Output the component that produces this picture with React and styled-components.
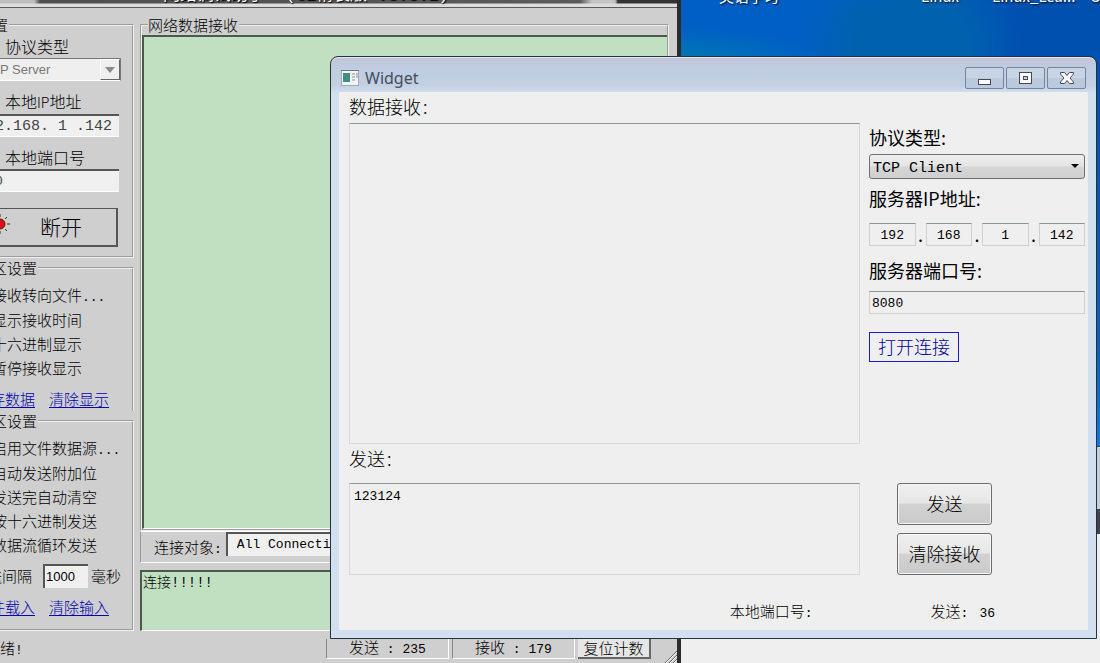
import React, { useState } from "react";
import styled, { createGlobalStyle } from "styled-components";

const receiveOptions = ["接收转向文件...", "显示接收时间", "十六进制显示", "暂停接收显示"];

const sendOptions = [
  "启用文件数据源...",
  "自动发送附加位",
  "发送完自动清空",
  "按十六进制发送",
  "数据流循环发送",
];

function OptionList({ options }) {
  return options.map((text) => {
    const dots = text.endsWith("...");
    return (
      <Option key={text}>
        <input type="checkbox" />
        <span>
          {dots ? text.slice(0, -3) : text}
          {dots && <Mono>...</Mono>}
        </span>
      </Option>
    );
  });
}

function Assistant() {
  return (
    <AssistantWindow>
      <AssistantTitle>
        <span>网络调试助手{"  (C2精装版 V3.8.2)"}</span>
      </AssistantTitle>
      <AssistantBody>
        <Sidebar>
          <Group $height={243}>
            <Legend $start={23}>置</Legend>
            <SideLabel htmlFor="protocol">协议类型</SideLabel>
            <SideSelect>
              <select id="protocol" disabled>
                <option>P Server</option>
              </select>
              <i>
                <svg width="10" height="6" viewBox="0 0 10 6">
                  <path d="M0 0h10L5 6z" fill="#8a8a8a" />
                </svg>
              </i>
            </SideSelect>
            <SideLabel $gap htmlFor="local-ip">
              本地<small>IP</small>地址
            </SideLabel>
            <SunkenInput id="local-ip" defaultValue="2.168. 1 .142" $size={15} />
            <SideLabel $gap htmlFor="local-port">
              本地端口号
            </SideLabel>
            <SunkenInput id="local-port" defaultValue="0" $size={13} />
            <DisconnectButton type="button">
              <svg width="20" height="20" viewBox="0 0 20 20">
                <g stroke="#333" strokeWidth="1">
                  <path d="M17 10h3M15 5l2-2M15 15l2 2M10 3V0M10 17v3" />
                </g>
                <circle cx="10" cy="10" r="5" fill="#d80f16" stroke="#6b1014" />
              </svg>
              <span>断开</span>
            </DisconnectButton>
          </Group>
          <Group $height={153} $open>
            <Legend $start={22}>区设置</Legend>
            <Options>
              <OptionList options={receiveOptions} />
            </Options>
            <Links>
              <a href="#save">存数据</a>
              <a href="#clear-view">清除显示</a>
            </Links>
          </Group>
          <Group $height={220}>
            <Legend $start={22}>区设置</Legend>
            <Options>
              <OptionList options={sendOptions} />
            </Options>
            <IntervalRow>
              <label htmlFor="interval">送间隔</label>
              <input id="interval" defaultValue="1000" />
              <span>毫秒</span>
            </IntervalRow>
            <Links>
              <a href="#load">件载入</a>
              <a href="#clear-input">清除输入</a>
            </Links>
          </Group>
        </Sidebar>
        <Main>
          <Group $height={516} $wide>
            <Legend $start={6}>网络数据接收</Legend>
            <GreenArea aria-label="网络数据接收" $height={494} />
          </Group>
          <TargetBar>
            <label htmlFor="target">
              连接对象<Mono>:</Mono>
            </label>
            <select id="target">
              <option>All Connections</option>
            </select>
          </TargetBar>
          <GreenArea aria-label="log" $height={61} defaultValue="连接!!!!!" />
        </Main>
      </AssistantBody>
      <StatusBar>
        <StatusReady>
          绪<Mono>!</Mono>
        </StatusReady>
        <StatusCell>
          发送<Mono> : 235</Mono>
        </StatusCell>
        <StatusCell>
          接收<Mono> : 179</Mono>
        </StatusCell>
        <ResetButton type="button">复位计数</ResetButton>
        <Grip width="14" height="14" viewBox="0 0 14 14">
          <path d="M1 14L14 1M5 14l9-9M9 14l5-5" stroke="#666" />
          <path d="M2 14L14 2M6 14l8-8M10 14l4-4" stroke="#fff" />
        </Grip>
      </StatusBar>
    </AssistantWindow>
  );
}

function Widget() {
  const [ip, setIp] = useState(["192", "168", "1", "142"]);

  const changeIp = (index, value) => {
    setIp(ip.map((part, i) => (i === index ? value : part)));
  };

  return (
    <WidgetWindow>
      <WidgetTitle>
        <svg width="18" height="16" viewBox="0 0 18 16">
          <rect x="0.5" y="0.5" width="17" height="15" fill="#f4f4f4" stroke="#a5abb3" />
          <path d="M0 .5h18" stroke="#6f7780" />
          <rect x="2" y="3" width="7" height="9" fill="#3f8f86" />
          <path d="M11 4h3M11 7h3M11 10h3M16 3v5" stroke="#8b9098" />
        </svg>
        <h1>Widget</h1>
        <CaptionButton type="button" aria-label="Minimize">
          <svg width="14" height="14" viewBox="0 0 14 14">
            <rect x="0.5" y="8.5" width="12" height="5" fill="#fff" stroke="#464b5a" />
          </svg>
        </CaptionButton>
        <CaptionButton type="button" aria-label="Maximize">
          <svg width="14" height="14" viewBox="0 0 14 14">
            <rect x="0.5" y="1.5" width="12" height="11" fill="#fff" stroke="#464b5a" />
            <rect x="4.5" y="5.5" width="4" height="3" fill="#c3cede" stroke="#464b5a" />
          </svg>
        </CaptionButton>
        <CaptionButton type="button" aria-label="Close">
          <svg width="14" height="14" viewBox="0 0 14 14">
            <path
              d="M0.5 1.5H4.5L7 4.5L9.500 1.5H13.5V3L10 7L13.5 11V12.5H9.5L7 9.5L4.5 12.5H0.5V11L4 7L0.5 3Z"
              fill="#fff"
              stroke="#464b5a"
            />
          </svg>
        </CaptionButton>
      </WidgetTitle>
      <WidgetBody>
        <TextColumn>
          <AreaLabel htmlFor="received" $height={31}>
            数据接收<Colon>:</Colon>
          </AreaLabel>
          <Area id="received" $height={321} />
          <AreaLabel htmlFor="outgoing" $height={39}>
            发送<Colon>:</Colon>
          </AreaLabel>
          <Area id="outgoing" $height={92} defaultValue="123124" />
        </TextColumn>
        <ControlColumn>
          <Field $top={31} $gap={1}>
            <label htmlFor="type">协议类型:</label>
            <Combo>
              <select id="type">
                <option>TCP Client</option>
              </select>
              <svg width="8" height="4" viewBox="0 0 8 4">
                <path d="M0 0h8L4 4z" />
              </svg>
            </Combo>
          </Field>
          <Field $top={5} $gap={9}>
            <label htmlFor="ip-0">服务器IP地址:</label>
            <IpRow>
              {ip.map((part, index) => (
                <React.Fragment key={index}>
                  {index > 0 && <span>.</span>}
                  <LineInput
                    id={`ip-${index}`}
                    value={part}
                    $center
                    onChange={(e) => changeIp(index, e.target.value)}
                  />
                </React.Fragment>
              ))}
            </IpRow>
          </Field>
          <Field $top={10} $gap={5}>
            <label htmlFor="port">服务器端口号:</label>
            <LineInput id="port" defaultValue="8080" />
          </Field>
          <ConnectButton type="button">打开连接</ConnectButton>
          <Actions>
            <PushButton type="button">发送</PushButton>
            <PushButton type="button">清除接收</PushButton>
          </Actions>
        </ControlColumn>
        <WidgetFooter>
          <div>
            本地端口号<Mono>:</Mono>
          </div>
          <div>
            发送<Mono>:</Mono>
          </div>
          <Mono>36</Mono>
        </WidgetFooter>
      </WidgetBody>
    </WidgetWindow>
  );
}

function App() {
  return (
    <Desktop>
      <GlobalStyle />
      <IconLabel $left={719}>英语学习</IconLabel>
      <IconLabel $left={921}>Linux</IconLabel>
      <IconLabel $left={992}>Linux_Lea...</IconLabel>
      <IconLabel $left={1090}>C</IconLabel>
      <BackPage>
        <div />
      </BackPage>
      <Assistant />
      <Widget />
    </Desktop>
  );
}

export default App;

const GlobalStyle = createGlobalStyle`
  * {
    box-sizing: border-box;
  }
  body {
    margin: 0;
    overflow: hidden;
    font-family: "Noto Sans CJK SC", sans-serif;
    font-size: 15px;
    font-weight: 300;
    color: #000;
  }
  input, select, textarea, button {
    margin: 0;
    padding: 0;
    border: none;
    border-radius: 0;
    outline: none;
    resize: none;
    appearance: none;
    font: inherit;
    color: inherit;
  }
  svg {
    display: block;
  }
`;

const Desktop = styled.div`
  position: relative;
  height: 100vh;
  overflow: hidden;
  background:
    radial-gradient(ellipse 130px 32px at 690px 60px, #0079b4, transparent),
    radial-gradient(ellipse 110px 90px at 910px 45px, #0062ae 50%, transparent),
    linear-gradient(to right, #005fc4 850px, #0050b0 1020px) 0 0 / 100% 60px no-repeat,
    linear-gradient(#004fae 60px, #0a62b8 350px, #0c7bdc 446px);
`;

const IconLabel = styled.div`
  position: absolute;
  top: -14px;
  left: ${(props) => props.$left}px;
  font-size: 15px;
  line-height: 20px;
  font-weight: 400;
  white-space: nowrap;
  color: #fff;
  text-shadow: 1px 1px 2px #000;
`;

// the page lying under both windows, seen at the right and at the bottom
const BackPage = styled.div`
  position: absolute;
  top: 446px;
  right: 0;
  bottom: 0;
  left: 600px;
  background: linear-gradient(#c4cdd8 62px, #efefef 62px);
  border-top: 1px solid #2b4a66;
  padding-top: 62px;
  div {
    height: 25px;
    background: #3f4249;
  }
`;

const Mono = styled.span`
  font-family: "Liberation Mono", monospace;
  font-size: 13px;
  white-space: pre;
`;

const Colon = styled.span`
  padding-left: 2px;
`;

const AssistantWindow = styled.section`
  position: absolute;
  top: -20px;
  left: -30px;
  width: 711px;
  background: #cfcfcf;
  border-right: 4px solid #2c2c2c;
`;

const AssistantTitle = styled.div`
  height: 28px;
  padding-left: 193px;
  line-height: 28px;
  color: #fff;
  background:
    linear-gradient(transparent 23px, #dcdcdc 24px, #dcdcdc 27px, #5a5a5a 27px),
    linear-gradient(to right, #bdbdbd 64px, #4f4f4f 70px, #5a5a5a 610px, #c4c4c4 622px, #c4c4c4 645px, #333 648px);
  span {
    font-family: "Liberation Mono", "Noto Sans CJK SC", monospace;
    font-size: 17px;
    font-weight: 400;
    white-space: pre;
    text-shadow: 1px 1px 1px #000;
  }
`;

const AssistantBody = styled.div`
  display: grid;
  grid-template-columns: 164px 1fr;
  gap: 6px;
  padding: 7px 8px 0 0;
`;

const Sidebar = styled.div`
  display: flex;
  flex-direction: column;
`;

const Main = styled.div`
  display: flex;
  flex-direction: column;
  min-width: 0;
`;

const Group = styled.fieldset`
  min-width: 0;
  height: ${(props) => props.$height}px;
  margin: 0;
  padding: 0;
  border: 2px groove #f0f0f0;
  border-left-width: ${(props) => (props.$wide ? 2 : 0)}px;
  border-bottom-width: ${(props) => (props.$open ? 0 : 2)}px;
`;

const Legend = styled.legend`
  margin-left: ${(props) => props.$start}px;
  padding: 0 1px 0 0;
  line-height: 20px;
`;

const SideLabel = styled.label`
  display: block;
  margin-top: ${(props) => (props.$gap ? 9 : 0)}px;
  padding-left: 35px;
  font-size: 16px;
  line-height: 23px;
  small {
    font-size: 14px;
  }
`;

const SideSelect = styled.div`
  display: flex;
  width: 151px;
  height: 23px;
  background: #efefef;
  border: 1px solid #777;
  border-color: #777 #777 #fff;
  select {
    flex: 1;
    padding-left: 29px;
    background: none;
    font-family: "Liberation Sans", sans-serif;
    font-size: 13px;
    opacity: 1;
    color: #777;
  }
  i {
    display: grid;
    place-items: center;
    width: 20px;
    border: 1px solid #666;
    border-color: #fff #666 #666 #fff;
  }
`;

const SunkenInput = styled.input`
  display: block;
  width: 149px;
  height: 23px;
  padding-left: 25px;
  background: #f0f0f0;
  border-top: 2px solid #555;
  border-bottom: 1px solid #fff;
  font-family: "Liberation Mono", monospace;
  font-size: ${(props) => props.$size}px;
  color: #444;
`;

const DisconnectButton = styled.button`
  display: flex;
  align-items: center;
  width: 148px;
  height: 39px;
  margin-top: 16px;
  padding-left: 18px;
  gap: 30px;
  background: #cfcfcf;
  border: 2px solid #555;
  border-top-width: 1px;
  font-size: 21px;
  line-height: 30px;
  svg {
    margin-bottom: 6px;
  }
  span {
    padding-bottom: 2px;
  }
`;

const Options = styled.div`
  padding-top: 6px;
`;

const Option = styled.label`
  display: flex;
  align-items: center;
  gap: 5px;
  padding-left: 4px;
  height: 24px;
  line-height: 22px;
  white-space: nowrap;
  input {
    width: 13px;
    height: 13px;
    background: #fff;
    border: 1px solid #666;
  }
`;

const Links = styled.div`
  display: flex;
  gap: 14px;
  margin-top: 7px;
  padding-left: 20px;
  line-height: 24px;
  a {
    color: #0000b4;
    text-underline-offset: 2px;
  }
`;

const IntervalRow = styled.div`
  display: flex;
  align-items: center;
  gap: 3px;
  margin-top: 7px;
  padding-left: 17px;
  line-height: 24px;
  input {
    width: 45px;
    height: 24px;
    margin-left: 8px;
    padding-left: 1px;
    background: #f0f0f0;
    border-top: 2px solid #555;
    border-left: 2px solid #555;
    font-family: "Liberation Sans", sans-serif;
    font-size: 13px;
  }
`;

const GreenArea = styled.textarea`
  display: block;
  width: 100%;
  height: ${(props) => props.$height}px;
  padding: 0 0 0 1px;
  background: #c1e0c1;
  border-top: 2px solid #4c5a4c;
  border-left: 2px solid #4c5a4c;
  border-bottom: 1px solid #fff;
  font-family: "Liberation Mono", "Noto Sans CJK SC", monospace;
  font-size: 14px;
  line-height: 22px;
`;

const TargetBar = styled.div`
  display: flex;
  height: 32px;
  margin-bottom: 7px;
  padding-left: 13px;
  gap: 4px;
  border: 1px solid #fff;
  border-left-color: #999;
  line-height: 30px;
  select {
    flex: 1;
    height: 24px;
    padding-left: 9px;
    background: #f0f0f0;
    border-top: 2px solid #555;
    border-left: 2px solid #555;
    font-family: "Liberation Mono", monospace;
    font-size: 13px;
    line-height: 20px;
  }
`;

const StatusBar = styled.footer`
  display: flex;
  height: 40px;
  padding: 8px 0 0 30px;
  gap: 3px;
`;

const StatusReady = styled.div`
  flex: 1;
  line-height: 18px;
`;

const StatusCell = styled.div`
  width: 123px;
  height: 20px;
  padding-left: 22px;
  border-left: 1px solid #888;
  border-right: 1px solid #fff;
  border-bottom: 1px solid #fff;
  line-height: 16px;
  white-space: pre;
`;

const ResetButton = styled.button`
  width: 73px;
  height: 20px;
  background: #e6e6e6;
  border-right: 2px solid #666;
  border-bottom: 2px solid #666;
  line-height: 18px;
`;

const Grip = styled.svg`
  align-self: flex-start;
  margin: 11px 0 0 9px;
`;

const WidgetWindow = styled.section`
  position: absolute;
  top: 56px;
  right: 3px;
  left: 330px;
  padding: 0 8px 8px;
  background: linear-gradient(#c3c4d8 0, #bfcde2 14px, #c3d0e2 28px, #d2dfee 36px, #d2dff0 100%);
  border: 1px solid #27303c;
  border-radius: 8px 8px 0 0;
  box-shadow: inset 0 1px #e3e6ee;
`;

const WidgetTitle = styled.header`
  display: flex;
  align-items: center;
  gap: 2px;
  height: 35px;
  padding: 7px 2px 0;
  h1 {
    flex: 1;
    margin: 0 0 0 4px;
    font-family: "Noto Sans", sans-serif;
    font-size: 16px;
    line-height: 22px;
    font-weight: 400;
    color: #454d60;
  }
`;

const CaptionButton = styled.button`
  display: grid;
  place-items: center;
  width: 39px;
  height: 22px;
  background: linear-gradient(#c8d4e4 50%, #bbc9dc 50%);
  border: 1px solid #7485a0;
  border-radius: 2px;
`;

const WidgetBody = styled.div`
  display: grid;
  grid-template-columns: 1fr 216px;
  column-gap: 9px;
  padding: 0 3px 0 10px;
  background: #efefef;
`;

const TextColumn = styled.div`
  display: flex;
  flex-direction: column;
`;

const AreaLabel = styled.label`
  height: ${(props) => props.$height}px;
  font-size: 18px;
  line-height: 28px;
`;

const Area = styled.textarea`
  width: 100%;
  height: ${(props) => props.$height}px;
  padding: 5px 4px;
  background: #efefef;
  border: 1px solid #d8d8d8;
  border-top-color: #8f9494;
  font-family: "Liberation Mono", monospace;
  font-size: 13px;
`;

const ControlColumn = styled.div`
  display: flex;
  flex-direction: column;
`;

const Field = styled.div`
  display: flex;
  flex-direction: column;
  gap: ${(props) => props.$gap}px;
  padding-top: ${(props) => props.$top}px;
  label {
    font-size: 18px;
    line-height: 28px;
    padding-bottom: 2px;
    font-weight: 400;
  }
`;

const Combo = styled.div`
  display: flex;
  align-items: center;
  height: 25px;
  padding-right: 5px;
  background: linear-gradient(#efefef, #e4e4e4 48%, #d6d6d6 52%, #cfcfcf);
  border: 1px solid #707070;
  border-radius: 3px;
  select {
    flex: 1;
    height: 23px;
    padding: 3px 0 0 3px;
    background: none;
    font-family: "Liberation Mono", monospace;
    font-size: 15px;
  }
  svg {
    margin-bottom: 2px;
  }
`;

const LineInput = styled.input`
  flex: ${(props) => (props.$center ? "1 1 0" : "none")};
  min-width: 0;
  height: 23px;
  padding: 1px 2px 0;
  background: #efefef;
  border: 1px solid #d0d0d0;
  border-top-color: #8f9494;
  font-family: "Liberation Mono", monospace;
  font-size: 13px;
  text-align: ${(props) => (props.$center ? "center" : "left")};
`;

const IpRow = styled.div`
  display: flex;
  span {
    width: 10px;
    height: 23px;
    font-size: 18px;
    line-height: 22px;
    font-weight: 400;
    text-align: center;
  }
`;

const ConnectButton = styled.button`
  align-self: flex-start;
  width: 90px;
  height: 30px;
  margin-top: 18px;
  padding-bottom: 2px;
  background: #efefef;
  border: 1px solid #1c1cc4;
  font-size: 18px;
  line-height: 26px;
  color: #0000a0;
`;

const Actions = styled.div`
  display: flex;
  flex-direction: column;
  gap: 8px;
  margin: auto 0 0 28px;
`;

const PushButton = styled.button`
  width: 95px;
  height: 42px;
  padding-bottom: 2px;
  background: linear-gradient(#f0f0f0, #e6e6e6 48%, #d2d2d2 50%, #cacaca);
  border: 1px solid #6c6c6c;
  border-radius: 3px;
  box-shadow: inset 0 0 0 1px #f5f5f5;
  font-size: 18px;
`;

const WidgetFooter = styled.footer`
  grid-column: 1 / -1;
  display: flex;
  align-items: baseline;
  justify-content: flex-end;
  height: 55px;
  padding: 25px 90px 0 0;
  line-height: 22px;
  div:first-child {
    margin-right: 118px;
  }
  div + div {
    margin-right: 11px;
  }
`;
